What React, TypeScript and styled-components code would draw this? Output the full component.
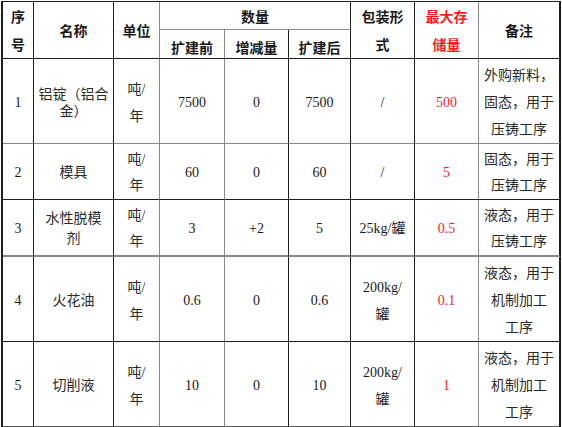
import React from 'react';
import styled, { createGlobalStyle } from 'styled-components';

const GlobalStyle = createGlobalStyle`
  html, body {
    margin: 0;
    padding: 0;
    background: #ffffff;
  }
  body {
    font-family: "Liberation Serif", "Noto Sans CJK SC", serif;
    color: #1a1a1a;
  }
`;

const DARK = '#1f1f1f';
const GRAY = '#8a8a8a';

const Page = styled.div`
  padding: 1px 0 0 1px;
`;

const Table = styled.table`
  table-layout: fixed;
  border-collapse: separate;
  border-spacing: 0;
  width: 560px;
  border-top: 1px solid ${DARK};
  border-left: 2px solid ${DARK};
`;

const Cell = styled.td<{ $right?: string; $bottom?: string; $bw?: number; $lh?: number; $red?: boolean }>`
  box-sizing: border-box;
  padding: 3px 0 0 0;
  text-align: center;
  vertical-align: middle;
  font-size: 14px;
  line-height: ${p => p.$lh ?? 27}px;
  color: ${p => (p.$red ? '#f0232d' : '#1a1a1a')};
  border-right: 1px solid ${p => p.$right ?? DARK};
  border-bottom: ${p => p.$bw ?? 1}px solid ${p => p.$bottom ?? DARK};
  overflow: hidden;
`;

const Head = styled(Cell).attrs({ as: 'th' })<{ $pt?: number }>`
  font-family: "Noto Sans CJK SC", sans-serif;
  font-weight: 700;
  padding: ${p => p.$pt ?? 0}px 0 0 0;
  line-height: ${p => p.$lh ?? 28}px;
  color: ${p => (p.$red ? '#ff1a1a' : '#1a1a1a')};
`;

const Zh = styled.span`
  font-family: "Noto Sans CJK SC", sans-serif;
  line-height: 1;
  color: #2a2a2a;
`;

type Row = {
  no: string;
  name: React.ReactNode;
  nameLh?: number;
  lh: number;
  before: string;
  delta: string;
  after: string;
  pack: React.ReactNode;
  max: string;
  note: React.ReactNode;
  height: number;
  bottom: string;
  bw: number;
};

const rows: Row[] = [
  {
    no: '1',
    name: <>铝锭（铝合<br />金）</>,
    nameLh: 16,
    lh: 27,
    before: '7500',
    delta: '0',
    after: '7500',
    pack: '/',
    max: '500',
    note: <>外购新料，<br />固态，用于<br />压铸工序</>,
    height: 85,
    bottom: GRAY,
    bw: 1,
  },
  {
    no: '2',
    name: '模具',
    lh: 26,
    before: '60',
    delta: '0',
    after: '60',
    pack: '/',
    max: '5',
    note: <>固态，用于<br />压铸工序</>,
    height: 56,
    bottom: DARK,
    bw: 1,
  },
  {
    no: '3',
    name: <>水性脱模<br />剂</>,
    nameLh: 20,
    lh: 26,
    before: '3',
    delta: '+2',
    after: '5',
    pack: <>25kg/<Zh>罐</Zh></>,
    max: '0.5',
    note: <>液态，用于<br />压铸工序</>,
    height: 56,
    bottom: GRAY,
    bw: 2,
  },
  {
    no: '4',
    name: '火花油',
    lh: 27,
    before: '0.6',
    delta: '0',
    after: '0.6',
    pack: <>200kg/<br /><Zh>罐</Zh></>,
    max: '0.1',
    note: <>液态，用于<br />机制加工<br />工序</>,
    height: 84,
    bottom: DARK,
    bw: 1,
  },
  {
    no: '5',
    name: '切削液',
    lh: 27,
    before: '10',
    delta: '0',
    after: '10',
    pack: <>200kg/<br /><Zh>罐</Zh></>,
    max: '1',
    note: <>液态，用于<br />机制加工<br />工序</>,
    height: 85,
    bottom: '#555555',
    bw: 2,
  },
];

export default function App() {
  return (
    <Page>
      <GlobalStyle />
      <Table>
        <colgroup>
          <col style={{ width: 31 }} />
          <col style={{ width: 80 }} />
          <col style={{ width: 46 }} />
          <col style={{ width: 65 }} />
          <col style={{ width: 64 }} />
          <col style={{ width: 62 }} />
          <col style={{ width: 64 }} />
          <col style={{ width: 64 }} />
          <col style={{ width: 82 }} />
        </colgroup>
        <thead>
          <tr style={{ height: 28 }}>
            <Head rowSpan={2}>序<br />号</Head>
            <Head rowSpan={2}>名称</Head>
            <Head rowSpan={2} $right={GRAY}>单位</Head>
            <Head colSpan={3} $bottom={GRAY} $lh={26}>数量</Head>
            <Head rowSpan={2}>包装形<br />式</Head>
            <Head rowSpan={2} $red $right={GRAY}>最大存<br />储量</Head>
            <Head rowSpan={2} style={{ borderRightWidth: 2 }}>备注</Head>
          </tr>
          <tr style={{ height: 29 }}>
            <Head $right={GRAY} $lh={20} $pt={6}>扩建前</Head>
            <Head $lh={20} $pt={6}>增减量</Head>
            <Head $lh={20} $pt={6}>扩建后</Head>
          </tr>
        </thead>
        <tbody>
          {rows.map(r => (
            <tr key={r.no} style={{ height: r.height }}>
              <Cell $bottom={r.bottom} $bw={r.bw} $lh={r.lh}>{r.no}</Cell>
              <Cell $bottom={r.bottom} $bw={r.bw} $lh={r.nameLh ?? r.lh}><Zh>{r.name}</Zh></Cell>
              <Cell $bottom={r.bottom} $bw={r.bw} $lh={r.lh} $right={GRAY}><Zh>吨</Zh>/<br /><Zh>年</Zh></Cell>
              <Cell $bottom={r.bottom} $bw={r.bw} $lh={r.lh} $right={GRAY}>{r.before}</Cell>
              <Cell $bottom={r.bottom} $bw={r.bw} $lh={r.lh}>{r.delta}</Cell>
              <Cell $bottom={r.bottom} $bw={r.bw} $lh={r.lh}>{r.after}</Cell>
              <Cell $bottom={r.bottom} $bw={r.bw} $lh={r.lh}>{r.pack}</Cell>
              <Cell $bottom={r.bottom} $bw={r.bw} $lh={r.lh} $right={GRAY} $red>{r.max}</Cell>
              <Cell $bottom={r.bottom} $bw={r.bw} $lh={r.lh} style={{ borderRightWidth: 2 }}><Zh>{r.note}</Zh></Cell>
            </tr>
          ))}
        </tbody>
      </Table>
    </Page>
  );
}
